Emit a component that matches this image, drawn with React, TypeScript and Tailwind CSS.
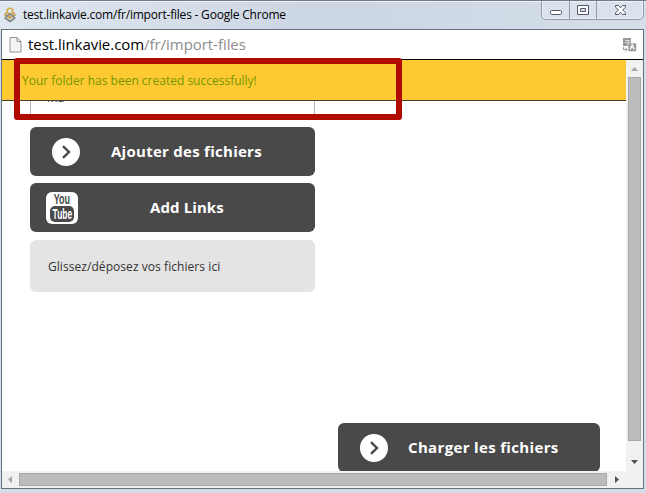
import type { ReactNode } from "react";

function ActionButton({ icon, label, className, iconClass }: { icon: ReactNode; label: string; className: string; iconClass: string }) {
  return (
    <button className={`flex shrink-0 items-center bg-[#494949] font-['Open_Sans',sans-serif] text-[15px] font-bold text-white ${className}`}>
      <span className={`flex shrink-0 ${iconClass}`}>{icon}</span>
      <span className="whitespace-nowrap">{label}</span>
    </button>
  );
}

function ArrowIcon() {
  return (
    <svg width="28" height="28" viewBox="0 0 28 28">
      <circle cx="14" cy="14" r="14" fill="#fff" />
      <path d="M11.7 8.8 17 14l-5.3 5.2" fill="none" stroke="#494949" strokeWidth="2.4" strokeLinecap="round" />
    </svg>
  );
}

function YouTubeIcon() {
  return (
    <span className="flex h-8 w-8 flex-col items-center overflow-hidden rounded-[6px] bg-white pt-px text-[#494949]">
      <span className="flex h-[13px] scale-x-[.64] font-['Liberation_Sans',sans-serif] text-[14px] leading-[13px] font-bold">You</span>
      <span className="flex h-[16px] w-[24px] items-center justify-center rounded-[5px] bg-[#494949] text-white">
        <span className="scale-x-[.6] font-['Liberation_Sans',sans-serif] text-[14px] leading-[14px] font-bold">Tube</span>
      </span>
    </span>
  );
}

function Favicon() {
  return (
    <svg width="12" height="16" viewBox="0 0 12 16" fill="none">
      <circle cx="6" cy="4" r="2.8" stroke="#d3a94b" strokeWidth="1.6" />
      <path d="M2.6 5.5.9 7.8 5.8 11 11 7.8 9.4 5.5" stroke="#c59b42" strokeWidth="1.5" />
      <path d="M3 8.800 1.300 11 6 14.400 10.700 11 9 8.800 6 7Z" stroke="#858786" strokeWidth="1.7" />
      <path d="M4.500 8.500h3L6 10.500Z" fill="#cfa54a" />
    </svg>
  );
}

function WindowControls() {
  return (
    <div className="flex h-[19px] w-[103px] rounded-b-[5px] border border-t-0 border-[#929ba8] bg-[#d9e2ed] shadow-[inset_0_0_0_1px_#edf2f8]">
      <div className="w-[28px] border-r border-[#929ba8]">
        <svg width="27" height="18"><rect x="8.5" y="9.5" width="11" height="4" rx="1" fill="#fff" stroke="#535666" /></svg>
      </div>
      <div className="w-[27px] border-r border-[#929ba8]">
        <svg width="26" height="18"><path fillRule="evenodd" d="M7.5 4.500h11v9h-11ZM10.500 7.500v3h5v-3Z" fill="#fff" stroke="#535666" /></svg>
      </div>
      <svg width="46" height="18"><path d="m18.500 4.500h3l2 2.300 2-2.300h3v1.700L25.600 9l2.900 2.800v1.700h-3l-2-2.300-2 2.300h-3v-1.700l2.900-2.800-2.900-2.800Z" fill="#fff" stroke="#535666" /></svg>
    </div>
  );
}

function TranslateIcon() {
  return (
    <svg width="15" height="14" viewBox="0 0 15 14">
      <rect x="1" width="8" height="8" fill="#999" />
      <path d="M3 2.500h4.500L5 5M3 4.500h2" stroke="#ddd" fill="none" />
      <rect x="6" y="5" width="8.500" height="8.500" fill="#999" stroke="#fff" strokeWidth=".6" />
      <path d="m8 11.500 2.200-5 2.200 5M8.800 9.800h2.800" stroke="#fff" fill="none" strokeWidth="1.100" />
      <path d="M1.500 9v2.500H5M3.300 9.500l1.700 2-2 2" stroke="#999" fill="none" />
    </svg>
  );
}

export default function App() {
  return (
    <div className="relative flex h-[493px] w-[646px] flex-col overflow-hidden border-t border-[#737985] bg-[#d3deea] font-['Open_Sans',sans-serif]">
      <header className="flex h-7 shrink-0 items-start border-t border-[#f0f4f8] bg-gradient-to-r from-[#dfe7f0] via-[#ccd6e3] to-[#d5dfea] pl-1">
        <div className="mt-[5px] flex"><Favicon /></div>
        <h1 className="ml-[7px] mt-[4px] flex-1 whitespace-nowrap text-[12px] leading-[18px] tracking-[-0.21px] text-black">test.linkavie.com/fr/import-files - Google Chrome</h1>
        <div className="mr-[2px] -mt-px"><WindowControls /></div>
      </header>
      <main className="ml-px flex h-[460px] w-[643px] shrink-0 flex-col border border-[#66717b] bg-white">
        <div className="flex h-[29px] shrink-0 items-center pl-[7px] pr-[6px]">
          <svg width="13" height="16" viewBox="0 0 13 16"><path d="M1 .5h7l4 4v10.500H1Z" fill="#f5f5f5" stroke="#929292" /><path d="M8 .5v4h4" fill="none" stroke="#929292" /></svg>
          <div className="-mt-px ml-[6px] flex-1 whitespace-nowrap text-[15px] leading-5 tracking-[-0.05px] text-black">test.linkavie.com<span className="text-[#8c8c8c]">/fr/import-files</span></div>
          <TranslateIcon />
        </div>
        <div className="flex h-[412px] shrink-0 border-t border-black">
          <div className="flex w-[624px] flex-col overflow-hidden">
            <div className="flex h-[41px] shrink-0 items-center border-b border-[#463e2c] bg-[#ffca31] pt-[2px] pl-5 text-[12px] text-[#719600]">Your folder has been created successfully!</div>
            <div className="ml-7 h-[18px] w-[285px] shrink-0 overflow-hidden border-x border-[#b5b5b5] pl-4 text-[12px] text-[#333]">
              <div className="-mt-[12px] leading-[18px]">Ma</div>
            </div>
            <ActionButton icon={<ArrowIcon />} label="Ajouter des fichiers" className="ml-7 mt-2 h-[49px] w-[285px] rounded-[6px] tracking-[0.27px]" iconClass="ml-[22px] mr-[31px]" />
            <ActionButton icon={<YouTubeIcon />} label="Add Links" className="ml-7 mt-[7px] h-[49px] w-[285px] rounded-[6px] tracking-[0.1px]" iconClass="ml-4 mr-[72px]" />
            <div className="ml-7 mt-2 flex h-[52px] w-[285px] shrink-0 items-center rounded-[6px] bg-[#e4e4e4] pt-[2px] pl-[18px] text-[12px] tracking-[0.06px] text-[#333]">Glissez/déposez vos fichiers ici</div>
            <ActionButton icon={<ArrowIcon />} label="Charger les fichiers" className="ml-[336px] mt-[131px] h-[49px] w-[262px] rounded-[6px] tracking-[0.34px]" iconClass="ml-[22px] mr-5" />
          </div>
          <div className="flex w-[17px] flex-col items-center bg-[#f1f1f1]">
            <svg width="17" height="17"><path d="m5 11 3.500-4 3.500 4Z" fill="#a5a5a5" /></svg>
            <div className="h-[364px] w-[13px] border border-[#a8a8a8] bg-[#bcbcbc]" />
            <svg className="mt-[13px]" width="17" height="17"><path d="M5 6h7l-3.500 4Z" fill="#505050" /></svg>
          </div>
        </div>
        <div className="flex h-[17px] shrink-0 items-center bg-[#f1f1f1]">
          <svg width="17" height="17"><path d="M10 5v7L6 8.500Z" fill="#a5a5a5" /></svg>
          <div className="h-[13px] w-[588px] border border-[#a8a8a8] bg-[#bcbcbc]" />
          <svg className="ml-[2px]" width="17" height="17"><path d="M6 5v7l4-3.500Z" fill="#505050" /></svg>
        </div>
      </main>
      <div className="pointer-events-none absolute left-[14px] top-[57px] h-[62px] w-[388px] rounded-[3px] border-[6px] border-[#b10b00]" />
    </div>
  );
}
